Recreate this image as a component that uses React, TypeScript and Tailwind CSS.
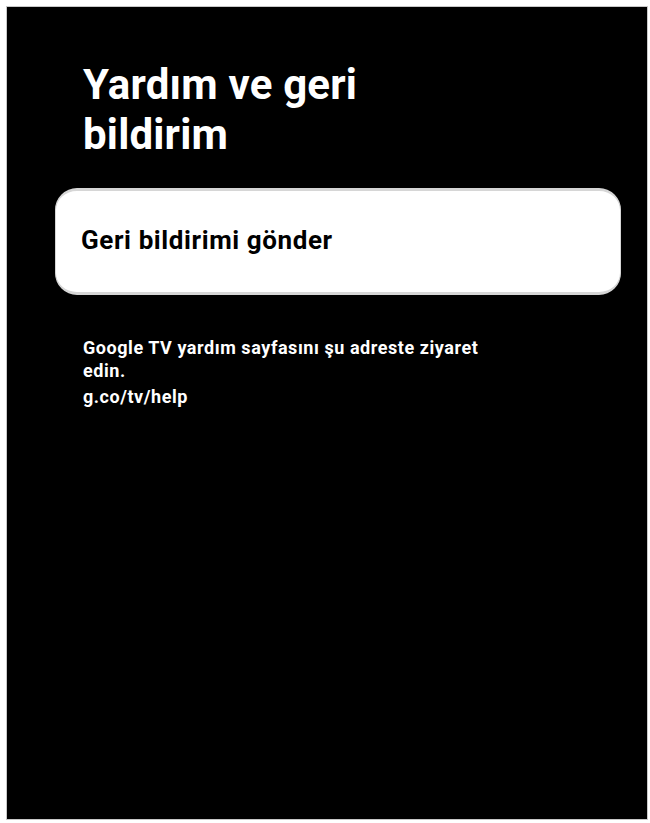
import React from 'react';

const font = { fontFamily: 'Roboto, "Noto Sans", sans-serif' };

export default function App() {
    return (
        <div className="w-[650px] h-[823px] bg-white pl-[6px] pt-[6px] overflow-hidden" style={font}>
            <div className="w-[642px] h-[814px] bg-black border border-[#c8c8c8] flex flex-col pl-[48px] pr-[26px] pt-[53px]">
                <h1 className="pl-[28px] text-[42px] leading-[50px] font-bold text-white tracking-[0.2px]">
                    Yardım ve geri
                    <br />
                    bildirim
                </h1>

                <button className="mt-[28px] h-[107px] w-full rounded-[22px] bg-white border-y-[3px] border-x border-[#d6d6d6] flex items-center px-[25px] pb-1 text-left">
                    <span className="text-[26px] leading-[30px] font-bold text-black tracking-[0.6px]">Geri bildirimi gönder</span>
                </button>

                <div className="mt-[41px] pl-[28px] text-white font-bold tracking-[0.55px]">
                    <p className="max-w-[420px] text-[18px] leading-[23px]">
                        Google TV yardım sayfasını şu adreste ziyaret edin.
                    </p>
                    <p className="mt-[3px] text-[18px] leading-[23px]">g.co/tv/help</p>
                </div>
            </div>
        </div>
    );
}
